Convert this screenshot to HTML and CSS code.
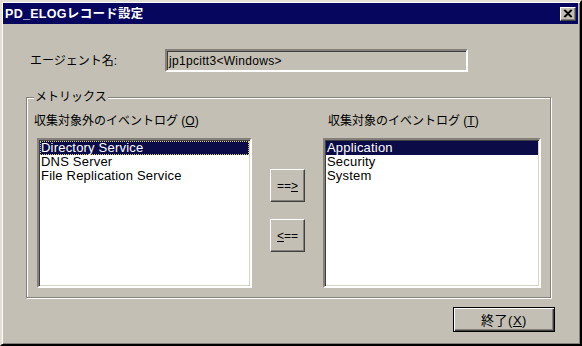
FILE: index.html
```html
<!DOCTYPE html>
<html lang="ja">
<head>
  <meta charset="UTF-8" />
  <title>PD_ELOGレコード設定</title>
  <link rel="stylesheet" href="styles.css">
</head>
<body>
  <div class="window">
    <!-- Title bar -->
    <div class="titlebar">
      <span class="title">PD_ELOGレコード設定</span>
      <span class="close-btn">
        <svg width="10" height="9" viewBox="0 0 10 9">
          <path d="M1 1 L8 8 M2 1 L9 8 M8 1 L1 8 M9 1 L2 8" stroke="#000" stroke-width="1.2" fill="none"/>
        </svg>
      </span>
    </div>

    <!-- Agent -->
    <div class="agent-row">
      <span class="agent-label">エージェント名:</span>
      <div class="agent-field">jp1pcitt3&lt;Windows&gt;</div>
    </div>

    <!-- Metrics group -->
    <div class="group">
      <span class="group-title">メトリックス</span>
      <div class="group-grid">
        <div class="col">
          <div class="col-label left">収集対象外のイベントログ (<u>O</u>)</div>
          <ul class="list">
            <li class="selected focused">Directory Service</li>
            <li>DNS Server</li>
            <li>File Replication Service</li>
          </ul>
        </div>

        <div class="move-btns">
          <button class="btn">==<u>&gt;</u></button>
          <button class="btn"><u>&lt;</u>==</button>
        </div>

        <div class="col">
          <div class="col-label right">収集対象のイベントログ (<u>T</u>)</div>
          <ul class="list">
            <li class="selected">Application</li>
            <li>Security</li>
            <li>System</li>
          </ul>
        </div>
      </div>
    </div>

    <div class="footer">
      <button class="btn btn-end">終了(<u>X</u>)</button>
    </div>
  </div>
</body>
</html>
```

FILE: styles.css
```css
:root {
  --face: #c3bfb4;
  --shadow: #85817a;
  --dark: #404040;
  --navy: #06065e;
  --select: #0b0b48;
}

body {
  margin: 0;
  font-family: "Liberation Sans", "Noto Sans CJK JP", sans-serif;
  font-size: 12px;
  color: #000;
  background: var(--face);
}

u {
  text-decoration: underline;
  text-underline-offset: 1px;
}

.window {
  width: 582px;
  height: 346px;
  box-sizing: border-box;
  background: var(--face);
  border: 2px solid;
  border-color: #e4e0d6 #000 #000 #e4e0d6;
  box-shadow: inset 1px 1px 0 #fff, inset -1px -1px 0 var(--shadow);
  padding: 1px;
}

/* title bar */
.titlebar {
  height: 21px;
  margin-right: 1px;
  background: var(--navy);
  display: flex;
  align-items: center;
  justify-content: space-between;
  padding: 0 2px;
}

.title {
  color: #fff;
  font-weight: bold;
  font-size: 12.5px;
  line-height: 14px;
  letter-spacing: 0.3px;
}

.close-btn {
  width: 16px;
  height: 14px;
  box-sizing: border-box;
  background: var(--face);
  border: 1px solid;
  border-color: #fff var(--dark) var(--dark) #fff;
  box-shadow: inset -1px -1px 0 var(--shadow);
  display: flex;
  align-items: center;
  justify-content: center;
}

/* agent row */
.agent-row {
  display: flex;
  align-items: center;
  margin: 25px 0 0 27px;
}

.agent-label {
  width: 135px;
  line-height: 16px;
}

.agent-field {
  width: 303px;
  height: 23px;
  box-sizing: border-box;
  border: 2px solid;
  border-color: var(--shadow) #fff #fff var(--shadow);
  box-shadow: inset 1px 1px 0 var(--dark);
  padding: 3px 0 0 2px;
  line-height: 15px;
  letter-spacing: 0.3px;
}

/* group box */
.group {
  position: relative;
  width: 525px;
  height: 201px;
  box-sizing: border-box;
  margin: 25px 0 0 23px;
  border: 1px solid var(--shadow);
  box-shadow: inset 1px 1px 0 #fff, 1px 1px 0 #fff;
  padding: 15px 0 0 10px;
}

.group-title {
  position: absolute;
  top: -8px;
  left: 7px;
  padding: 0 1px;
  line-height: 14px;
  background: var(--face);
}

.group-grid {
  display: grid;
  grid-template-columns: 215px 35px 218px;
  column-gap: 18px;
}

.col-label {
  line-height: 16px;
  margin-bottom: 9px;
  white-space: nowrap;
}

.col-label.left {
  margin-left: -3px;
}

.col-label.right {
  margin-left: 5px;
}

.list {
  list-style: none;
  margin: 0;
  height: 150px;
  box-sizing: border-box;
  background: #fff;
  border: 2px solid;
  border-color: var(--shadow) #fff #fff var(--shadow);
  box-shadow: inset 1px 1px 0 var(--dark), inset -1px -1px 0 #d8d4ca;
  padding: 1px 1px 0 1px;
  font-size: 13px;
  letter-spacing: 0.2px;
}

.list li {
  line-height: 14px;
  padding-left: 1px;
  white-space: nowrap;
}

.list li.selected {
  background: var(--select);
  color: #fff;
}

.list li.focused {
  outline: 1px dotted #d8cf7a;
  outline-offset: -1px;
}

/* move buttons */
.move-btns {
  display: flex;
  flex-direction: column;
  gap: 17px;
  padding-top: 56px;
}

.btn {
  font-family: inherit;
  font-size: 12px;
  color: #000;
  background: var(--face);
  border: 1px solid;
  border-color: #fff var(--dark) var(--dark) #fff;
  box-shadow: inset -1px -1px 0 var(--shadow);
  padding: 0;
  height: 33px;
  width: 35px;
}

/* footer */
.footer {
  display: flex;
  justify-content: flex-end;
  margin-top: 9px;
  padding-right: 24px;
}

.btn-end {
  width: 102px;
  height: 25px;
  border: 1px solid #000;
  box-shadow: inset 1px 1px 0 #fff, inset -1px -1px 0 var(--dark), inset -2px -2px 0 var(--shadow);
  font-size: 13px;
  letter-spacing: 0.5px;
}
```
